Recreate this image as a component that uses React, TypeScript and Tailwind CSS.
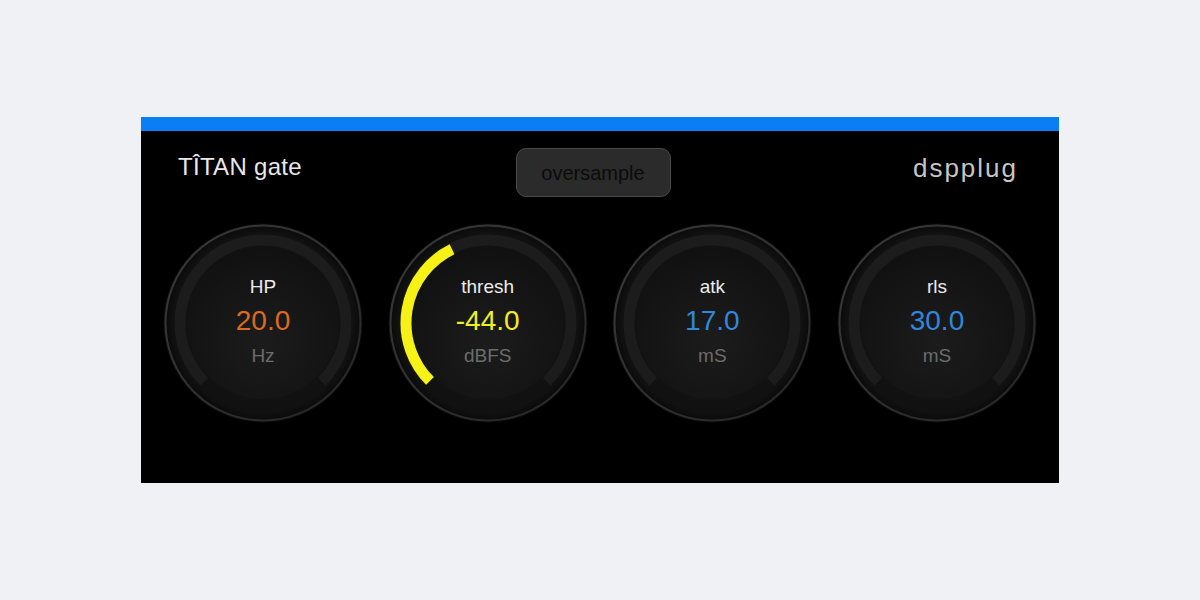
import * as React from 'react';

type KnobProps = {
  label: string;
  value: string;
  unit: string;
  valueColor: string;
  arcTo?: number;
};

const font = { fontFamily: '"Liberation Sans", Arial, sans-serif' };

// point on a circle, angle in degrees clockwise from 12 o'clock
function polar(r: number, deg: number) {
  const a = (deg * Math.PI) / 180;
  return { x: 100 + r * Math.sin(a), y: 100 - r * Math.cos(a) };
}

function arc(r: number, from: number, to: number) {
  const s = polar(r, from);
  const e = polar(r, to);
  const large = to - from > 180 ? 1 : 0;
  return `M ${s.x} ${s.y} A ${r} ${r} 0 ${large} 1 ${e.x} ${e.y}`;
}

function Knob({ label, value, unit, valueColor, arcTo }: KnobProps) {
  return (
    <div className="relative h-[200px] w-[200px]">
      <svg width="200" height="200" viewBox="0 0 200 200" className="absolute inset-0">
        <defs>
          <radialGradient id="kn-outer" cx="50%" cy="50%" r="50%">
            <stop offset="0%" stopColor="#161616" />
            <stop offset="92%" stopColor="#111111" />
            <stop offset="100%" stopColor="#0a0a0a" />
          </radialGradient>
          <radialGradient id="kn-inner" cx="50%" cy="62%" r="60%">
            <stop offset="0%" stopColor="#1c1c1c" />
            <stop offset="100%" stopColor="#111111" />
          </radialGradient>
          <linearGradient id="kn-rim" x1="0" y1="0" x2="1" y2="1">
            <stop offset="0%" stopColor="#3a3a3a" />
            <stop offset="100%" stopColor="#262626" />
          </linearGradient>
        </defs>
        <circle cx="100" cy="100" r="99.5" fill="#0b0b0b" />
        <circle cx="100" cy="100" r="97.5" fill="url(#kn-outer)" stroke="url(#kn-rim)" strokeWidth="2" />
        <path d={arc(83, -135, 135)} stroke="#1c1c1c" strokeWidth="11" fill="none" />
        <circle cx="100" cy="100" r="76" fill="url(#kn-inner)" />
        {arcTo !== undefined && (
          <path d={arc(82, -135, arcTo)} stroke="#f6f216" strokeWidth="11" fill="none" />
        )}
      </svg>
      <div className="absolute inset-0 flex flex-col items-center pt-[53px]" style={font}>
        <div className="text-[19px] leading-[22px] text-[#ececec]">{label}</div>
        <div className="mt-[7px] text-[28px] leading-[32px]" style={{ color: valueColor }}>
          {value}
        </div>
        <div className="mt-[8px] text-[19px] leading-[22px] text-[#6c6c6c]">{unit}</div>
      </div>
    </div>
  );
}

export default function App() {
  return (
    <div className="flex h-[600px] w-full items-center justify-center bg-[#eff1f5]" style={font}>
      <div className="w-[918px] bg-black">
        <div className="h-[14px] bg-[#0a7ef4]" />
        <div className="flex h-[352px] flex-col">
          <div className="relative flex h-[65px] items-end px-[37px]">
            <div className="mb-[15px] w-[300px] text-[24px] leading-[28px] tracking-[0.3px] text-[#e8e8e8]">
              TÎTAN gate
            </div>
            <div className="flex flex-1 justify-center">
              <button className="mb-[-1px] mr-[14px] h-[49px] w-[155px] rounded-[10px] border border-[#4a4a4a] bg-[#2b2b2b] text-[20px] text-[#0c0c0c]">
                oversample
              </button>
            </div>
            <div className="mb-[13px] flex w-[300px] justify-end pr-[4px] text-[26px] leading-[30px] tracking-[2px] text-[#c6c6c6]">
              dspplug
            </div>
          </div>
          <div className="mt-[27px] flex justify-between px-[22px]">
            <Knob label="HP" value="20.0" unit="Hz" valueColor="#de6a20" />
            <Knob label="thresh" value="-44.0" unit="dBFS" valueColor="#f0ec26" arcTo={-26} />
            <Knob label="atk" value="17.0" unit="mS" valueColor="#2f88dc" />
            <Knob label="rls" value="30.0" unit="mS" valueColor="#2f88dc" />
          </div>
        </div>
      </div>
    </div>
  );
}
